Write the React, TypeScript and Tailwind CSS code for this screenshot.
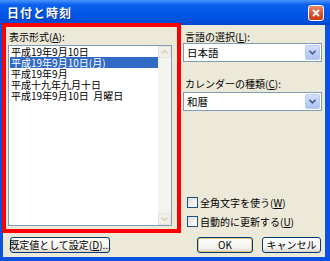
import React from "react";

const ROWS = [
  "平成19年9月10日",
  "平成19年9月10日(月)",
  "平成19年9月",
  "平成十九年九月十日",
  "平成19年9月10日  月曜日",
];

function Key({ k }: { k: string }) {
  return (
    <>
      (<span className="underline underline-offset-1">{k}</span>)
    </>
  );
}

function Combo({ value }: { value: string }) {
  return (
    <div className="h-[19px] border border-[#7F9DB9] bg-white flex items-center">
      <span className="flex-1 pl-[3px] text-[10.5px] leading-[13px]">{value}</span>
      <div className="w-[15px] h-[15px] mr-[1px] rounded-[2px] bg-[linear-gradient(180deg,#D3DEFB_0%,#BBCDF8_60%,#AFC3F3_100%)] border border-[#B9CBF3] flex items-center justify-center">
        <svg width="7" height="5" viewBox="0 0 7 5">
          <path d="M0.5 0.8 L3.5 3.8 L6.5 0.8" fill="none" stroke="#4D6185" strokeWidth="1.6" />
        </svg>
      </div>
    </div>
  );
}

function Check({ children }: { children: React.ReactNode }) {
  return (
    <div className="h-[13px] flex items-center pl-[4px]">
      <div className="w-[11px] h-[11px] border border-[#1C5180] bg-[linear-gradient(135deg,#DCDCD7_0%,#F4F4F0_60%,#FFFFFF_100%)]" />
      <span className="ml-[2px] text-[10px] leading-[13px] whitespace-nowrap">{children}</span>
    </div>
  );
}

function Arrow({ up }: { up: boolean }) {
  return (
    <div className="h-[12px] bg-[#F1EFE6] border border-[#E6E4DA] rounded-[1px] flex items-center justify-center">
      <svg width="7" height="4" viewBox="0 0 7 4">
        <path d={up ? "M0.5 3.5 L3.5 0.5 L6.5 3.5" : "M0.5 0.5 L3.5 3.5 L6.5 0.5"} fill="none" stroke="#CFCCBE" strokeWidth="1.4" />
      </svg>
    </div>
  );
}

function Btn({ children, w, def }: { children: React.ReactNode; w: string; def?: boolean }) {
  return (
    <div
      className={`${w} h-[16px] border border-[#003C74] rounded-[3px] bg-[linear-gradient(180deg,#FFFFFF_0%,#F4F3EE_70%,#D8D4C8_100%)] flex items-center justify-center text-[10px] leading-[12px] whitespace-nowrap ${
        def ? "shadow-[inset_0_0_0_1px_#E9C77A]" : ""
      }`}
    >
      {children}
    </div>
  );
}

export default function App() {
  return (
    <div className="relative w-[330px] h-[261px] overflow-hidden flex flex-col bg-[#0A52DF] font-['Noto_Sans_CJK_JP',sans-serif] text-black">
      {/* title bar */}
      <div className="h-[25px] flex items-center justify-between pl-[7px] pr-[6px] bg-[linear-gradient(180deg,#4A95FB_0%,#0E62F0_18%,#0056E6_55%,#0050DC_85%,#0344CB_100%)]">
        <span className="text-white text-[12px] font-bold leading-[14px] tracking-[1px] [text-shadow:1px_1px_0_#0A2F8F]">
          日付と時刻
        </span>
        <div className="w-[16px] h-[16px] rounded-[3px] border border-white bg-[linear-gradient(180deg,#EE8C6C_0%,#DB5530_50%,#C63C1A_100%)] flex items-center justify-center">
          <svg width="8" height="8" viewBox="0 0 8 8">
            <path d="M1 1 L7 7 M7 1 L1 7" stroke="white" strokeWidth="1.8" />
          </svg>
        </div>
      </div>

      {/* body */}
      <div className="flex-1 ml-[3px] mr-[5px] mb-[4px] bg-[#ECE9D8] flex flex-col pl-[5px] pr-[3px] pt-[5px] pb-[4px]">
        <div className="h-[198px] flex">
          {/* left */}
          <div className="w-[164px] flex flex-col">
            <div className="h-[13px] text-[10px] leading-[13px] pl-[1px]">
              表示形式<Key k="A" />:
            </div>
            <div className="mt-[2px] h-[181px] border border-[#7F9DB9] bg-white flex">
              <div className="flex-1 flex flex-col">
                {ROWS.map((r, i) => (
                  <div
                    key={i}
                    className={`h-[11px] ml-[1px] pl-[1px] text-[10px] leading-[11px] whitespace-pre ${
                      i === 1 ? "bg-[#316AC5] text-white" : ""
                    }`}
                  >
                    {r}
                  </div>
                ))}
              </div>
              <div className="w-[13px] flex flex-col bg-[#F5F4EE]">
                <Arrow up />
                <div className="flex-1" />
                <Arrow up={false} />
              </div>
            </div>
          </div>

          {/* right */}
          <div className="ml-[11px] flex-1 flex flex-col">
            <div className="h-[13px] text-[10px] leading-[13px] pl-[2px]">
              言語の選択<Key k="L" />:
            </div>
            <Combo value="日本語" />
            <div className="mt-[15px] h-[13px] text-[10px] leading-[13px] pl-[2px]">
              カレンダーの種類<Key k="C" />:
            </div>
            <div className="mt-[2px]">
              <Combo value="和暦" />
            </div>
            <div className="mt-auto flex flex-col gap-[6px]">
              <Check>
                全角文字を使う<Key k="W" />
              </Check>
              <Check>
                自動的に更新する<Key k="U" />
              </Check>
            </div>
          </div>
        </div>

        {/* buttons */}
        <div className="mt-[9px] flex items-center">
          <div className="ml-[2px]">
            <Btn w="w-[100px]">
              既定値として設定<Key k="D" />...
            </Btn>
          </div>
          <div className="ml-auto flex gap-[9px] mr-[1px]">
            <Btn w="w-[56px]" def>
              OK
            </Btn>
            <Btn w="w-[59px]">キャンセル</Btn>
          </div>
        </div>
      </div>

      {/* red highlight annotation */}
      <div className="absolute left-[2px] top-[23px] w-[179px] h-[210px] border-4 border-[#FF0000] pointer-events-none" />
    </div>
  );
}
